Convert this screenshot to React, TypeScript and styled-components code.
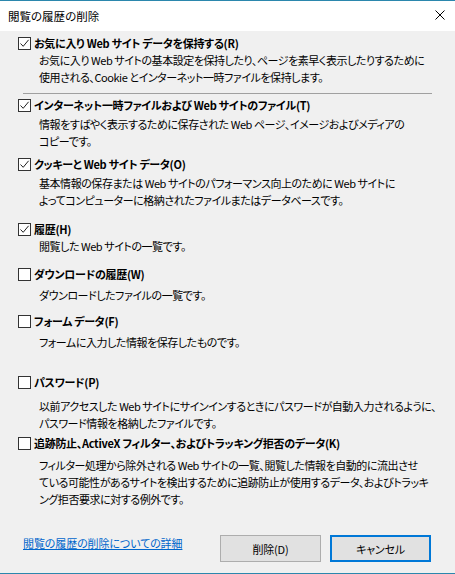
import styled, {createGlobalStyle} from "styled-components";

const GlobalStyle = createGlobalStyle`
  html, body {
    margin: 0;
    padding: 0;
    background: #f0f0f0;
  }
  * {
    box-sizing: border-box;
  }
`;

type Entry = {
    label: string;
    lines: string[];
    checked: boolean;
    top: number;
    gap: number;
    separator?: boolean;
}

const entries: Entry[] = [
    {
        label: "お気に入り Web サイト データを保持する(R)",
        lines: [
            "お気に入り Web サイトの基本設定を保持したり、ページを素早く表示したりするために",
            "使用される、Cookie とインターネット一時ファイルを保持します。",
        ],
        checked: true, top: 3.5, gap: 0.5, separator: true,
    },
    {
        label: "インターネット一時ファイルおよび Web サイトのファイル(T)",
        lines: [
            "情報をすばやく表示するために保存された Web ページ、イメージおよびメディアの",
            "コピーです。",
        ],
        checked: true, top: 2.5, gap: 2,
    },
    {
        label: "クッキーと Web サイト データ(O)",
        lines: [
            "基本情報の保存または Web サイトのパフォーマンス向上のために Web サイトに",
            "よってコンピューターに格納されたファイルまたはデータベースです。",
        ],
        checked: true, top: 6, gap: 2,
    },
    {
        label: "履歴(H)",
        lines: ["閲覧した Web サイトの一覧です。"],
        checked: true, top: 12, gap: 0,
    },
    {
        label: "ダウンロードの履歴(W)",
        lines: ["ダウンロードしたファイルの一覧です。"],
        checked: false, top: 11, gap: 4,
    },
    {
        label: "フォーム データ(F)",
        lines: ["フォームに入力した情報を保存したものです。"],
        checked: false, top: 9, gap: 4,
    },
    {
        label: "パスワード(P)",
        lines: [
            "以前アクセスした Web サイトにサインインするときにパスワードが自動入力されるように、",
            "パスワード情報を格納したファイルです。",
        ],
        checked: false, top: 23, gap: 7,
    },
    {
        label: "追跡防止、ActiveX フィルター、およびトラッキング拒否のデータ(K)",
        lines: [
            "フィルター処理から除外される Web サイトの一覧、閲覧した情報を自動的に流出させ",
            "ている可能性があるサイトを検出するために追跡防止が使用するデータ、およびトラッキ",
            "ング拒否要求に対する例外です。",
        ],
        checked: false, top: 3, gap: 5,
    },
];

const Window = styled.div`
  width: 455px;
  height: 574px;
  display: flex;
  flex-direction: column;
  background: #f0f0f0;
  border-top: 1px solid #2b87ad;
  border-bottom: 1px solid #2b87ad;
  font-family: "Noto Sans CJK JP", "Noto Sans", sans-serif;
  font-feature-settings: "palt";
  font-size: 11px;
  letter-spacing: -0.3px;
  color: #000;
  overflow: hidden;
`;

const TitleBar = styled.div`
  height: 30px;
  flex: none;
  background: #fff;
  display: flex;
  align-items: center;
  justify-content: space-between;
  padding: 0 10px 1px 8px;
`;

const Title = styled.span`
  font-size: 11.5px;
  letter-spacing: 0;
`;

const CloseButton = styled.span`
  display: flex;
  width: 10px;
  height: 10px;
  margin-top: -1px;
`;

const Body = styled.div`
  flex: 1;
  display: flex;
  flex-direction: column;
  padding: 0 24px 0 18px;
`;

const Item = styled.div<{ $top: number }>`
  display: flex;
  flex-direction: column;
  margin-top: ${p => p.$top}px;
`;

const LabelRow = styled.label`
  display: flex;
  align-items: center;
  gap: 3px;
  height: 17px;
  line-height: 17px;
  font-weight: 700;
  white-space: nowrap;
`;

const Box = styled.span<{ $checked: boolean }>`
  width: 13px;
  height: 13px;
  flex: none;
  border: 1px solid #333;
  background: #fff;
  display: flex;
  align-items: center;
  justify-content: center;
`;

const Description = styled.div<{ $gap: number }>`
  margin-top: ${p => p.$gap}px;
  padding-left: 21px;
  line-height: 17px;
  letter-spacing: -0.45px;
  white-space: nowrap;
`;

const Separator = styled.div`
  height: 1px;
  background: #a0a0a0;
  margin: 7px -1px 0 5px;
`;

const Footer = styled.div`
  display: flex;
  align-items: flex-start;
  justify-content: space-between;
  margin-top: 27.5px;
  padding-left: 5px;
`;

const Link = styled.a`
  color: #0066cc;
  text-decoration: underline;
  line-height: 17px;
  cursor: pointer;
  letter-spacing: -0.1px;
`;

const Buttons = styled.div`
  display: flex;
  gap: 9px;
`;

const Button = styled.button<{ $primary?: boolean }>`
  width: 101px;
  height: 27px;
  font-family: inherit;
  font-feature-settings: "palt";
  font-size: 11px;
  letter-spacing: -0.2px;
  color: #000;
  background: #e1e1e1;
  border: ${p => p.$primary ? "2px solid #0078d7" : "1px solid #adadad"};
  padding: 0;
`;

function CheckMark() {
    return <svg width="11" height="11" viewBox="0 0 11 11">
        <path d="M1.5 5.5 L4.2 8.3 L9.6 1.8" fill="none" stroke="#222" strokeWidth="1"/>
    </svg>
}

export default function App() {
    return <>
        <GlobalStyle/>
        <Window>
            <TitleBar>
                <Title>閲覧の履歴の削除</Title>
                <CloseButton>
                    <svg width="10" height="10" viewBox="0 0 10 10">
                        <path d="M0.5 0.5 L9.5 9.5 M9.5 0.5 L0.5 9.5" stroke="#000" strokeWidth="1"/>
                    </svg>
                </CloseButton>
            </TitleBar>
            <Body>
                {entries.map(entry => (
                    <div key={entry.label}>
                        <Item $top={entry.top}>
                            <LabelRow>
                                <Box $checked={entry.checked}>{entry.checked && <CheckMark/>}</Box>
                                {entry.label}
                            </LabelRow>
                            <Description $gap={entry.gap}>
                                {entry.lines.map(line => <div key={line}>{line}</div>)}
                            </Description>
                        </Item>
                        {entry.separator && <Separator/>}
                    </div>
                ))}
                <Footer>
                    <Link>閲覧の履歴の削除についての詳細</Link>
                    <Buttons>
                        <Button type="button">削除(D)</Button>
                        <Button type="button" $primary>キャンセル</Button>
                    </Buttons>
                </Footer>
            </Body>
        </Window>
    </>
}
